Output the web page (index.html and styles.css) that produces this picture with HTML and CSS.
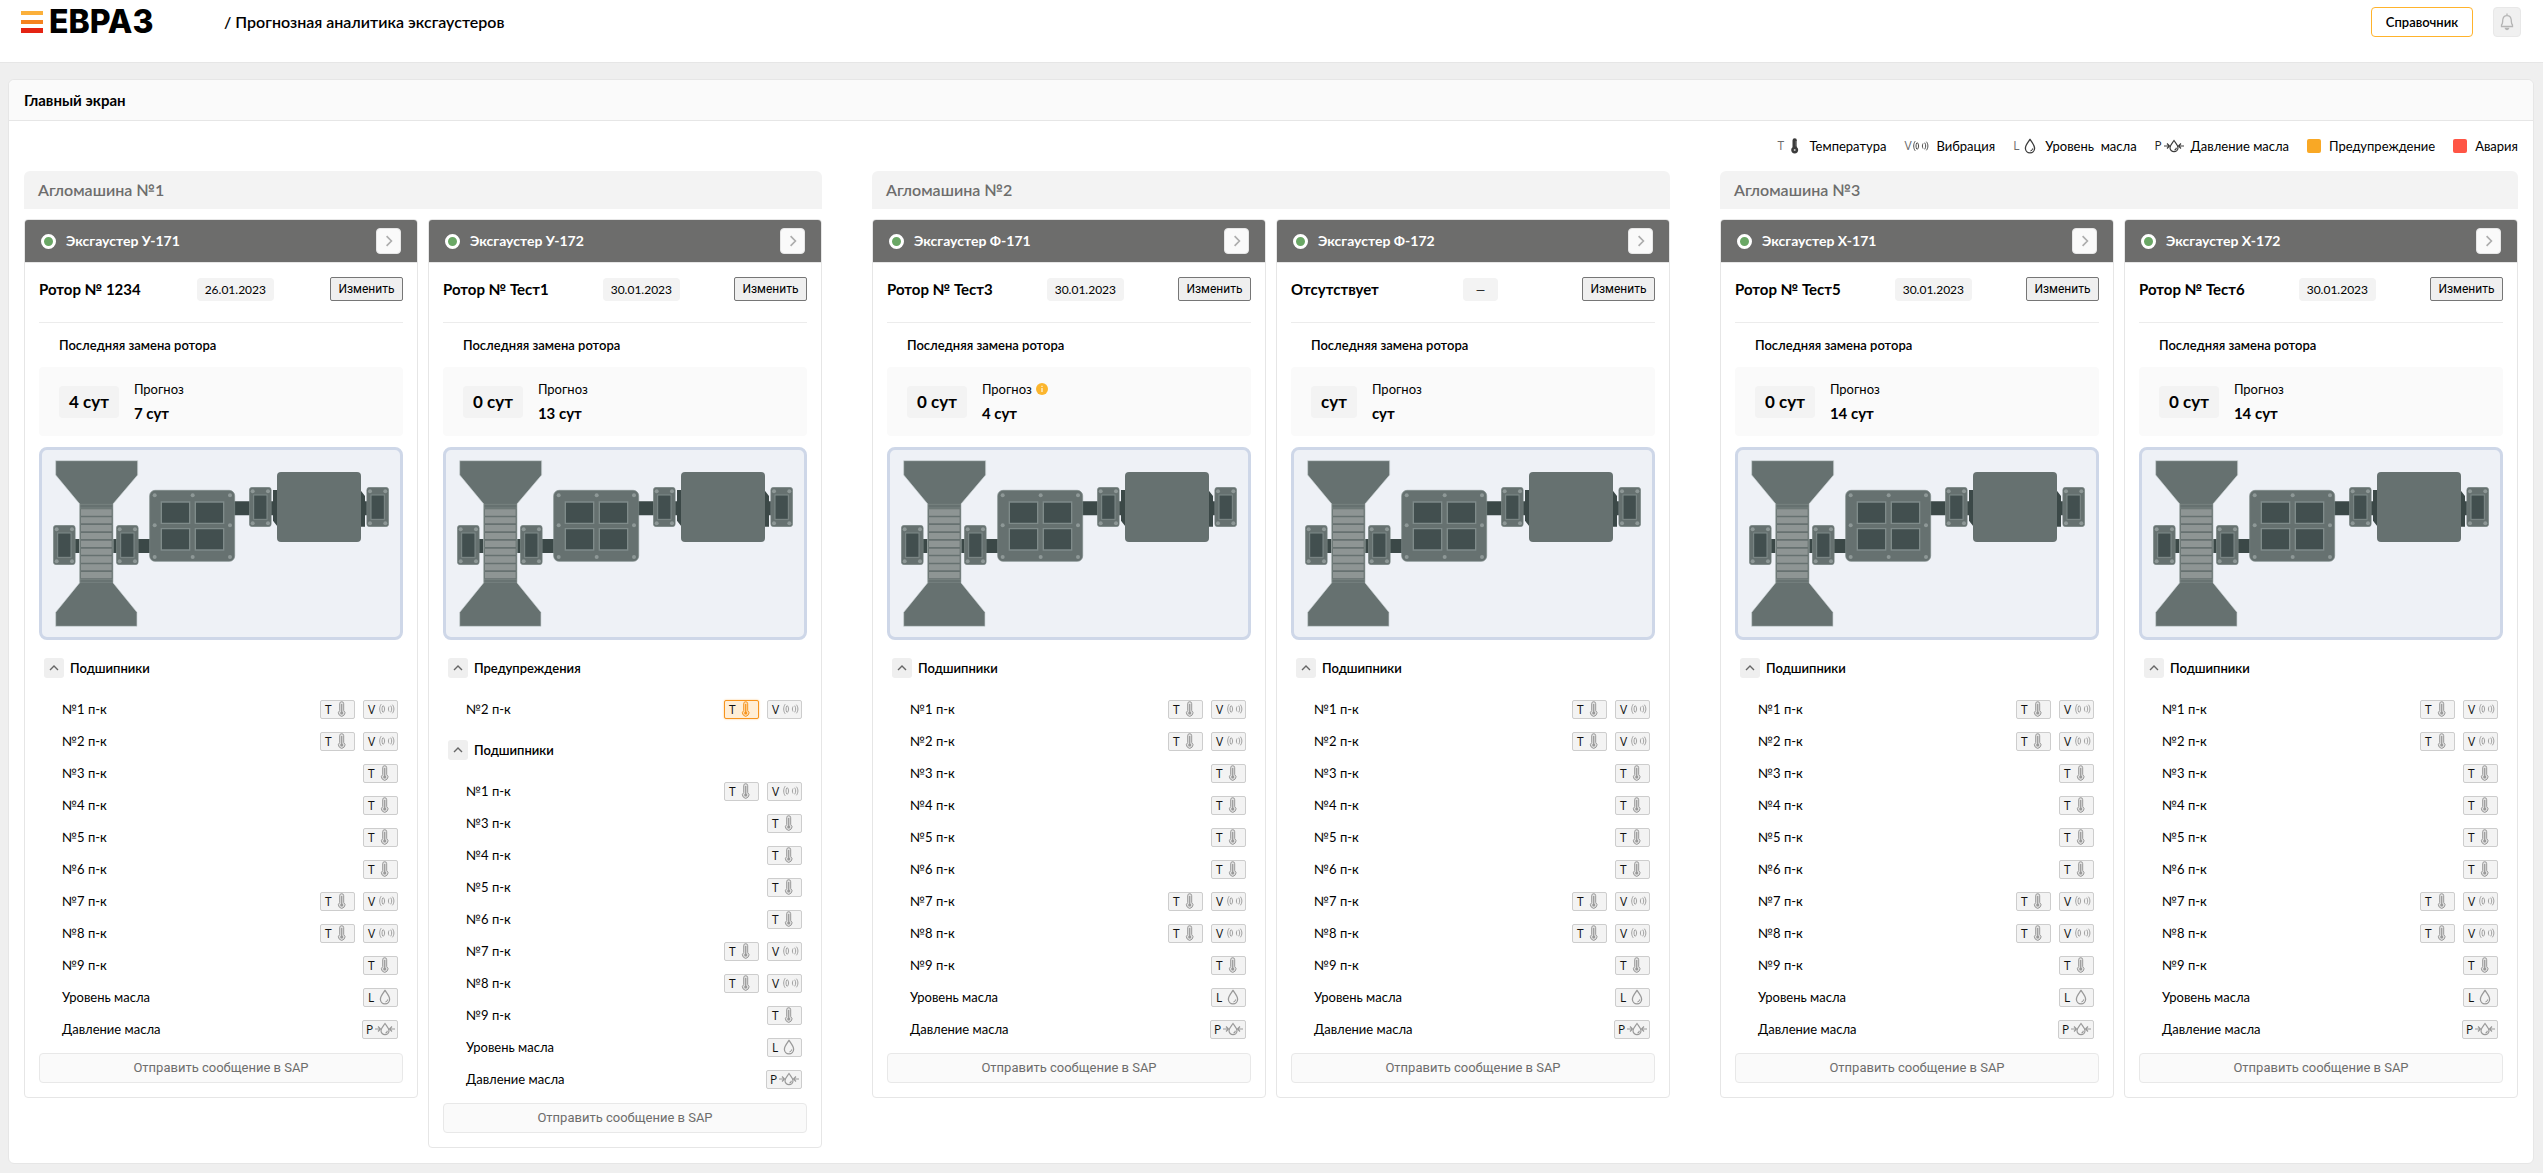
FILE: index.html
```html
<!DOCTYPE html>
<html lang="ru">
<head>
<meta charset="utf-8">
<title>Прогнозная аналитика эксгаустеров</title>
<link rel="stylesheet" href="styles.css">
</head>
<body>
<svg class="sprite" aria-hidden="true">
  <symbol id="i-temp" viewBox="0 0 16 16">
    <path d="M5.700 2.700a2 2 0 0 1 4 0V9.500a3.200 3.200 0 1 1-4 0z" fill="currentColor" fill-opacity=".2" stroke="currentColor"/>
    <path d="M7.700 3v8" stroke="currentColor" stroke-width="1.200"/>
    <circle cx="7.700" cy="12" r="1.500" fill="currentColor"/>
  </symbol>
  <symbol id="i-temp-solid" viewBox="0 0 16 16">
    <path d="M5.500 2.500a2.200 2.200 0 0 1 4.400 0V9.300a3.500 3.500 0 1 1-4.400 0z" fill="currentColor"/>
    <path d="M9.200 3v5.500" stroke="#fff" stroke-width=".8" stroke-opacity=".6"/>
    <circle cx="7.700" cy="12" r="1" fill="#fff" fill-opacity=".7"/>
  </symbol>
  <symbol id="i-vibro" viewBox="0 0 16 16">
    <g fill="none" stroke="currentColor" stroke-width=".9">
      <path d="M2.200 3.200C.2 6 .2 10 2.200 12.800"/><path d="M3.700 5c-.9 1.800-.9 4.200 0 6"/><path d="M4.200 4.400c1.900 2 1.900 5.200 0 7.200"/>
      <path d="M10 5.500c-.8 1.500-.8 3.500 0 5"/><path d="M11.700 4.700c1.300 2 1.300 4.600 0 6.600"/><path d="M13.400 3.700c2 2.600 2 6 0 8.600"/>
    </g>
  </symbol>
  <symbol id="i-drop" viewBox="0 0 16 16">
    <path d="M8 1.500C5.500 5 3.400 7.400 3.400 10.200a4.600 4.600 0 0 0 9.200 0C12.600 7.400 10.500 5 8 1.500z" fill="none" stroke="currentColor" stroke-width="1.300"/>
    <path d="M10.700 10.400a2.600 2.600 0 0 1-2.300 2.500" fill="none" stroke="currentColor"/>
  </symbol>
  <symbol id="i-press" viewBox="0 0 20 16">
    <path d="M10 2.500C8.300 5 6 7.200 6 9.700a4 4 0 0 0 8 0C14 7.200 11.700 5 10 2.500z" fill="none" stroke="currentColor" stroke-width="1.200"/>
    <path d="M0 8h5M3 5.500 5.500 8 3 10.500M20 8h-5M17 5.500 14.500 8 17 10.500M12.200 9.800a2 2 0 0 1-1.800 2.200" fill="none" stroke="currentColor" stroke-width="1.200"/>
  </symbol>
  <symbol id="i-right" viewBox="0 0 10 10"><path d="M3 1l4 4-4 4" fill="none" stroke="currentColor" stroke-width="1.400"/></symbol>
  <symbol id="i-up" viewBox="0 0 10 10"><path d="M1 7l4-4 4 4" fill="none" stroke="currentColor" stroke-width="1.400"/></symbol>
  <symbol id="bearing" viewBox="0 0 68 120">
    <rect x="1" y="1" width="66" height="118" rx="9" fill="#667170" stroke="#7f8b8a" stroke-width="2"/>
    <rect x="14" y="24" width="40" height="73" fill="#424f4f" stroke="#7f8b8a" stroke-width="3"/>
    <g fill="#8e9897"><circle cx="11" cy="13" r="6"/><circle cx="57" cy="13" r="6"/><circle cx="11" cy="109" r="6"/><circle cx="57" cy="109" r="6"/></g>
  </symbol>
  <symbol id="exhauster" viewBox="36 45 1074 561">
    <g fill="#3b4847">
      <path d="M130 312h25v42h-25zM245 312h115v42H245zM612 199h50v42h-50zM705 199h30v42h-30zM1000 199h15v42h-15z"/>
      <path d="M729 165h14v110l-14-18zM991 165l14 18v92h-14z"/>
    </g>
    <path d="M77 77h246v43l-74 87v236l72 89v42H77v-42l72-89V207l-72-87z" fill="#667170" stroke="#cdd4d6" stroke-width="2"/>
    <path d="M150 207h99v236h-99z" fill="#667170"/>
    <g fill="#8e9594"><path d="M153 223h92v19h-92zM153 247h92v18h-92zM153 270h92v19h-92zM153 294h92v18h-92zM153 317h92v19h-92zM153 341h92v18h-92zM153 364h92v19h-92zM153 388h92v18h-92zM153 411h92v19h-92z"/></g>
    <path d="M150 208h99M150 219h99M150 434h99M150 442h99M150 207v236M248 207v236" stroke="#808b8a" stroke-width="2"/>
    <rect x="359" y="166" width="255" height="213" rx="16" fill="#667170" stroke="#7f8b8a" stroke-width="2"/>
    <g fill="#424f4f" stroke="#7f8b8a" stroke-width="4"><path d="M394 201h85v64h-85zM496 201h85v64h-85zM394 281h85v64h-85zM496 281h85v64h-85z"/></g>
    <g fill="#8e9897"><circle cx="374" cy="181" r="6"/><circle cx="488" cy="181" r="6"/><circle cx="600" cy="181" r="6"/><circle cx="374" cy="271" r="6"/><circle cx="600" cy="271" r="6"/><circle cx="374" cy="366" r="6"/><circle cx="488" cy="366" r="6"/><circle cx="600" cy="366" r="6"/></g>
    <rect x="741" y="111" width="252" height="210" rx="12" fill="#667170"/>
    <use href="#bearing" x="69" y="270" width="68" height="120"/>
    <use href="#bearing" x="258" y="270" width="68" height="120"/>
    <use href="#bearing" x="657" y="156" width="68" height="120"/>
    <use href="#bearing" x="1009" y="156" width="68" height="120"/>
  </symbol>
</svg>

<header class="topbar">
  <a class="logo" href="#">
    <svg class="logo-mark" viewBox="0 0 22 22" aria-hidden="true"><path fill="#fbb03b" d="M0 0h22v4H0z"/><path fill="#f58220" d="M0 9h22v4H0z"/><path fill="#e42313" d="M0 17h22v5H0z"/></svg>
    <span class="logo-text">ЕВРАЗ</span>
  </a>
  <h1 class="topbar-title">/ Прогнозная аналитика эксгаустеров</h1>
  <button class="ref-button" type="button">Справочник</button>
  <button class="bell" type="button" aria-label="Уведомления">
    <svg viewBox="0 0 16 18" width="16" height="18" fill="none" stroke="currentColor" stroke-width="1.300"><path d="M8 .5v2M2.500 13.500V12C4 10.500 3.500 9 3.800 6.500 4.200 4 6 2.600 8 2.600s3.800 1.400 4.200 3.900c.3 2.500-.2 4 1.300 5.500v1.500z"/><path d="M6.500 15.500a1.600 1.600 0 0 0 3 0z" fill="currentColor"/></svg>
  </button>
</header>

<main class="panel">
  <h2 class="panel-title">Главный экран</h2>
  <div class="panel-body">
    <ul class="legend">
      <li><span class="letter">T</span><svg class="ico dark"><use href="#i-temp-solid"/></svg>Температура</li>
      <li><span class="letter">V</span><svg class="ico dark"><use href="#i-vibro"/></svg>Вибрация</li>
      <li><span class="letter">L</span><svg class="ico dark"><use href="#i-drop"/></svg>Уровень&nbsp; масла</li>
      <li><span class="letter strong">P</span><svg class="ico wide dark"><use href="#i-press"/></svg>Давление масла</li>
      <li><span class="swatch warning"></span>Предупреждение</li>
      <li><span class="swatch alarm"></span>Авария</li>
    </ul>
    <div class="groups" id="groups"></div>
  </div>
</main>
<script src="app.js"></script>
</body>
</html>
```
FILE: styles.css
```css
* { box-sizing: border-box; }
body {
  margin: 0;
  background: #efefef;
  color: #000;
  font: 14px/20px Lato, "Open Sans", sans-serif;
}
h1, h2, h3, h4, p, ul { margin: 0; padding: 0; font-weight: inherit; }
ul { list-style: none; }
button { font: inherit; color: inherit; padding: 0; cursor: pointer; }
svg { display: block; flex: none; }
.sprite { position: absolute; width: 0; height: 0; }

.topbar {
  display: flex;
  align-items: flex-start;
  height: 63px;
  padding: 7px 22px 0 21px;
  background: #fff;
  border-bottom: 1px solid #e6e6e6;
}
.logo { display: flex; align-items: center; gap: 6px; width: 203px; height: 30px; color: #000; text-decoration: none; }
.logo-mark { width: 22px; height: 22px; }
.logo-text { font: 800 32px/30px Inter, sans-serif; }
.topbar-title { flex: 1; font-size: 16px; line-height: 30px; font-weight: 600; }
.ref-button { width: 102px; height: 30px; margin-right: 20px; background: #fff; border: 1px solid #ffb32c; border-radius: 4px; font-weight: 600; font-size: 13px; }
.bell { display: grid; place-items: center; width: 28px; height: 30px; background: #f0f0f0; border: 1px solid #e8e8e8; border-radius: 4px; color: #b5b5b5; }

.panel { margin: 16px 9px 9px 8px; background: #fff; border: 1px solid #e6e6e6; border-radius: 6px; }
.panel-title { height: 41px; padding: 0 15px; line-height: 40px; font-weight: 700; font-size: 15px; background: #fafafa; border-bottom: 1px solid #e6e6e6; border-radius: 6px 6px 0 0; }
.panel-body { padding: 0 15px 15px; }

.legend { display: flex; justify-content: flex-end; align-items: center; gap: 18px; height: 50px; font-size: 13px; }
.legend li { display: flex; align-items: center; }
.legend .ico { margin-right: 7px; }
.letter { width: 9px; font: 12px/20px "Open Sans", sans-serif; color: #6b6b6b; }
.letter.strong { color: #222; }
.ico { width: 16px; height: 16px; }
.ico.wide { width: 20px; }
.ico.dark { color: #3c3c3c; }
.swatch { width: 14px; height: 14px; margin-right: 8px; border-radius: 2px; }
.swatch.warning { background: #f9a825; }
.swatch.alarm { background: #ff5545; }

.groups { display: grid; grid-template-columns: repeat(3, 1fr); gap: 50px; }
.group-title { height: 38px; padding: 0 14px; margin-bottom: 10px; line-height: 38px; font-size: 16px; font-weight: 600; color: #6d6d6c; background: #f3f3f3; border-radius: 6px 6px 0 0; }
.cards { display: grid; grid-template-columns: 1fr 1fr; gap: 10px; align-items: start; }

.card { border: 1px solid #e6e6e6; border-radius: 4px; }
.card-head { display: flex; align-items: center; gap: 10px; height: 43px; padding: 0 16px; background: #6d6d6c; color: #fff; border-bottom: 1px solid #e6e6e6; border-radius: 3px 3px 0 0; }
.status { width: 15px; height: 15px; background: #6aa765; border: 3px solid #fff; border-radius: 50%; }
.card-title { flex: 1; font-size: 14px; font-weight: 700; }
.go { display: grid; place-items: center; width: 25px; height: 26px; background: #fafafa; border: 1px solid #e6e6e6; border-radius: 4px; color: #adadad; }
.go svg { width: 12px; height: 12px; }
.card-body { padding: 14px; }

.rotor { display: flex; justify-content: space-between; align-items: center; height: 46px; padding-bottom: 21px; border-bottom: 1px solid #ececec; }
.rotor-name { font-size: 15px; font-weight: 700; }
.date { min-width: 35px; padding: 0 8px; line-height: 23px; font-size: 12px; text-align: center; background: #f3f3f3; border-radius: 4px; }
.change { width: 73px; height: 24px; font: 12px/20px Roboto, sans-serif; background: #efefef; border: 1px solid #767676; border-radius: 2px; }
.replaced { padding-left: 20px; line-height: 44px; font-weight: 600; font-size: 13px; }
.forecast { display: flex; align-items: center; gap: 15px; height: 69px; padding: 0 20px; background: #fafafa; border-radius: 4px; }
.days { padding: 0 10px; line-height: 32px; font-size: 17px; font-weight: 700; background: #f3f3f3; border-radius: 4px; }
.forecast dl { margin: 0; padding-bottom: 2px; }
.forecast dt { display: flex; align-items: center; gap: 4px; font-size: 13px; line-height: 24px; }
.forecast dd { margin: 0; font-size: 15px; line-height: 24px; font-weight: 700; }
.info { width: 12px; height: 12px; }

.scheme { margin: 11px 0 18px; background: #eef1f6; border: 3px solid #ced7e8; border-radius: 8px; }
.scheme svg { width: 100%; height: auto; aspect-ratio: 1074 / 561; }

.section { margin-bottom: 21px; }
.section:last-of-type { margin-bottom: 14px; }
.section-head { display: flex; align-items: center; gap: 6px; padding-left: 5px; margin-bottom: 21px; font-weight: 600; font-size: 13px; }
.toggle { display: grid; place-items: center; width: 20px; height: 20px; background: #efefef; border: 0; border-radius: 3px; color: #666; }
.toggle svg { width: 10px; height: 10px; }
.rows { display: grid; gap: 12px; }
.row { display: flex; align-items: center; gap: 8px; height: 20px; padding: 0 5px 0 23px; font-size: 13px; }
.row-name { flex: 1; }
.badge { display: flex; align-items: center; width: 35px; height: 19px; padding-left: 4px; background: #f3f3f3; border: 1px solid #cdcdcd; border-radius: 2px; }
.badge .letter { color: #111; line-height: 17px; }
.badge .ico { color: #999; }
.badge.press { width: 36px; padding-left: 3px; }
.badge.vibro .ico { margin-left: 2px; }
.badge.alert { background: #ffeed6; border-color: #f7941d; box-shadow: 0 0 2px #f9c27a; }
.badge.alert .ico { color: #f7941d; }
.sap { width: 100%; height: 30px; font: 13px/20px Roboto, sans-serif; color: #6d6d6c; background: #fafafa; border: 1px solid #e8e8e8; border-radius: 4px; }
```
FILE: app.js
```js
const COMMON = { 1: "TV", 2: "TV", 3: "T", 4: "T", 5: "T", 6: "T", 7: "TV", 8: "TV", 9: "T" };
const ICONS = { T: ["i-temp", "temp"], V: ["i-vibro", "vibro"], L: ["i-drop", "oil"], P: ["i-press", "press"] };

const groups = [
  { name: "Агломашина №1", cards: [
    { name: "Эксгаустер У-171", rotor: "Ротор № 1234", date: "26.01.2023", days: "4 сут", left: "7 сут" },
    { name: "Эксгаустер У-172", rotor: "Ротор № Тест1", date: "30.01.2023", days: "0 сут", left: "13 сут", warn: 2 } ] },
  { name: "Агломашина №2", cards: [
    { name: "Эксгаустер Ф-171", rotor: "Ротор № Тест3", date: "30.01.2023", days: "0 сут", left: "4 сут", info: true },
    { name: "Эксгаустер Ф-172", rotor: "Отсутствует", date: "—", days: "сут", left: "сут" } ] },
  { name: "Агломашина №3", cards: [
    { name: "Эксгаустер Х-171", rotor: "Ротор № Тест5", date: "30.01.2023", days: "0 сут", left: "14 сут" },
    { name: "Эксгаустер Х-172", rotor: "Ротор № Тест6", date: "30.01.2023", days: "0 сут", left: "14 сут" } ] }
];

const badge = (letter, alert) => {
  const [icon, kind] = ICONS[letter];
  return `<span class="badge ${kind}${alert ? " alert" : ""}"><span class="letter">${letter}</span><svg class="ico${letter === "P" ? " wide" : ""}"><use href="#${icon}"/></svg></span>`;
};

const row = (name, letters, alert) =>
  `<li class="row"><span class="row-name">${name}</span>${[...letters].map(l => badge(l, l === alert)).join("")}</li>`;

const section = (title, rows) => `
  <section class="section">
    <h4 class="section-head"><button class="toggle" type="button" aria-label="Свернуть"><svg><use href="#i-up"/></svg></button>${title}</h4>
    <ul class="rows">${rows.join("")}</ul>
  </section>`;

const INFO = `<svg class="info" viewBox="0 0 12 12"><circle cx="6" cy="6" r="6" fill="#fbb52d"/><path d="M5.200 5h1.600v4H5.200zM5.200 2.700h1.600v1.400H5.200z" fill="#ffe7b8"/></svg>`;

const card = c => {
  const bearings = Object.keys(COMMON).filter(n => +n !== c.warn).map(n => row(`№${n} п-к`, COMMON[n]));
  bearings.push(row("Уровень масла", "L"), row("Давление масла", "P"));
  return `
  <article class="card">
    <div class="card-head">
      <span class="status"></span>
      <h3 class="card-title">${c.name}</h3>
      <button class="go" type="button" aria-label="Открыть"><svg><use href="#i-right"/></svg></button>
    </div>
    <div class="card-body">
      <div class="rotor">
        <span class="rotor-name">${c.rotor}</span>
        <span class="date">${c.date}</span>
        <button class="change" type="button">Изменить</button>
      </div>
      <p class="replaced">Последняя замена ротора</p>
      <div class="forecast">
        <span class="days">${c.days}</span>
        <dl><dt>Прогноз${c.info ? INFO : ""}</dt><dd>${c.left}</dd></dl>
      </div>
      <div class="scheme"><svg><use href="#exhauster"/></svg></div>
      ${c.warn ? section("Предупреждения", [row(`№${c.warn} п-к`, "TV", "T")]) : ""}
      ${section("Подшипники", bearings)}
      <button class="sap" type="button">Отправить сообщение в SAP</button>
    </div>
  </article>`;
};

document.getElementById("groups").innerHTML = groups.map(g => `
  <section>
    <h2 class="group-title">${g.name}</h2>
    <div class="cards">${g.cards.map(card).join("")}</div>
  </section>`).join("");
```
